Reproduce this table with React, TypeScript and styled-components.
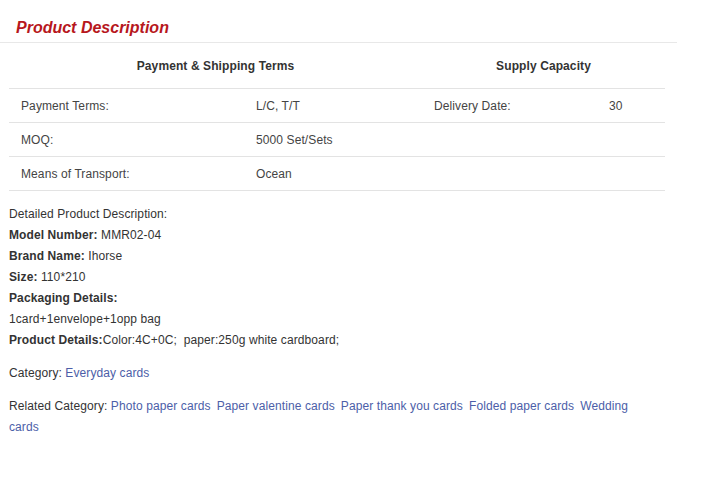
import React from "react";
import styled, { createGlobalStyle } from "styled-components";

const Global = createGlobalStyle`
  html, body { margin: 0; padding: 0; background: #fff; }
  body { font-family: "Liberation Sans", Arial, sans-serif; font-size: 12px; color: #333; letter-spacing: 0.1px; }
`;

const Page = styled.div`
  width: 677px;
  padding-top: 17px;
`;

const TitleBar = styled.div`
  border-bottom: 1px solid #e8e8e8;
  padding: 0 0 3px 16px;
`;

const Title = styled.h2`
  margin: 0;
  font-size: 16px;
  line-height: 22px;
  font-weight: bold;
  font-style: italic;
  letter-spacing: 0;
  color: #b7171d;
`;

const Table = styled.table`
  margin-left: 9px;
  width: 656px;
  border-collapse: collapse;
  table-layout: fixed;
  font-size: 12px;
`;

const Th = styled.th`
  height: 44px;
  padding: 0;
  font-weight: bold;
  color: #333;
  text-align: center;
  border-bottom: 1px solid #e3e3e3;
  vertical-align: middle;
  padding-top: 1px;
`;

const Td = styled.td`
  height: 33px;
  padding: 0 0 0 12px;
  color: #444;
  border-bottom: 1px solid #e3e3e3;
  vertical-align: middle;
`;

const Details = styled.div`
  padding: 13px 0 0 9px;
  line-height: 21px;
  color: #333;
`;

const Line = styled.div``;

const B = styled.b`
  font-weight: bold;
  color: #333;
`;

const Para = styled.div<{ $top: number }>`
  margin-top: ${(p) => p.$top}px;
  width: 640px;
`;

const Link = styled.a`
  color: #4c5ea8;
  text-decoration: none;
  margin-right: 6px;
`;

export default function App() {
  return (
    <>
      <Global />
      <Page>
        <TitleBar>
          <Title>Product Description</Title>
        </TitleBar>
        <Table>
          <colgroup>
            <col style={{ width: 235 }} />
            <col style={{ width: 178 }} />
            <col style={{ width: 175 }} />
            <col style={{ width: 68 }} />
          </colgroup>
          <thead>
            <tr>
              <Th colSpan={2}>Payment &amp; Shipping Terms</Th>
              <Th colSpan={2}>Supply Capacity</Th>
            </tr>
          </thead>
          <tbody>
            <tr>
              <Td>Payment Terms:</Td>
              <Td>L/C, T/T</Td>
              <Td>Delivery Date:</Td>
              <Td>30</Td>
            </tr>
            <tr>
              <Td>MOQ:</Td>
              <Td>5000 Set/Sets</Td>
              <Td></Td>
              <Td></Td>
            </tr>
            <tr>
              <Td>Means of Transport:</Td>
              <Td>Ocean</Td>
              <Td></Td>
              <Td></Td>
            </tr>
          </tbody>
        </Table>
        <Details>
          <Line>Detailed Product Description:</Line>
          <Line><B>Model Number:</B> MMR02-04</Line>
          <Line><B>Brand Name:</B> Ihorse</Line>
          <Line><B>Size:</B> 110*210</Line>
          <Line><B>Packaging Details:</B></Line>
          <Line>1card+1envelope+1opp bag</Line>
          <Line><B>Product Details:</B>Color:4C+0C;&nbsp; paper:250g white cardboard;</Line>
          <Para $top={12}>
            Category: <Link href="#">Everyday cards</Link>
          </Para>
          <Para $top={12}>
            Related Category: <Link href="#">Photo paper cards</Link>
            <Link href="#">Paper valentine cards</Link>
            <Link href="#">Paper thank you cards</Link>
            <Link href="#">Folded paper cards</Link>
            <Link href="#">Wedding cards</Link>
          </Para>
        </Details>
      </Page>
    </>
  );
}
